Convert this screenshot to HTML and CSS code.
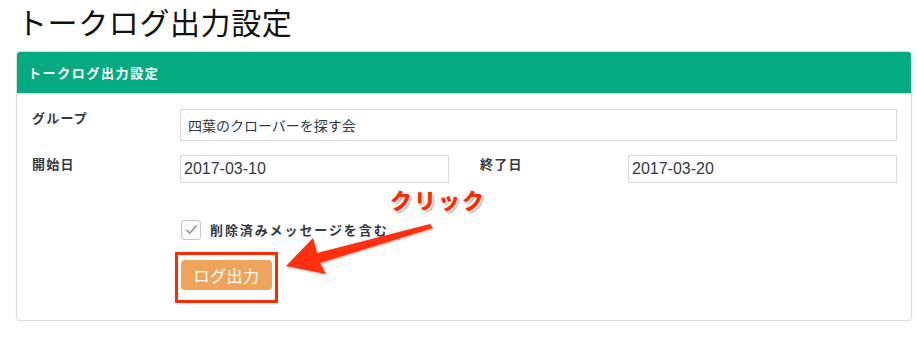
FILE: index.html
```html
<!DOCTYPE html>
<html lang="ja">
<head>
    <meta charset="UTF-8">
    <meta name="viewport" content="width=device-width, initial-scale=1.0">
    <title>トークログ出力設定</title>
    <link rel="stylesheet" href="styles.css">
</head>
<body>
    <h1 class="page-title">トークログ出力設定</h1>

    <div class="panel">
        <div class="panel-heading">トークログ出力設定</div>
        <div class="panel-body">
            <div class="form-grid">
                <label class="form-label">グループ</label>
                <div class="form-input wide">四葉のクローバーを探す会</div>

                <label class="form-label">開始日</label>
                <div class="form-input date">2017-03-10</div>
                <span class="spacer"></span>
                <label class="form-label">終了日</label>
                <div class="form-input date">2017-03-20</div>
            </div>

            <div class="check-row">
                <span class="checkbox">
                    <svg width="13" height="11" viewBox="0 0 13 11"><path d="M1.5 6 L4.8 9.3 L11.5 1.5" fill="none" stroke="#9a9a9a" stroke-width="1.6"/></svg>
                </span>
                <span class="check-label">削除済みメッセージを含む</span>
            </div>

            <div class="action-row">
                <span class="highlight-box">
                    <button class="btn-export">ログ出力</button>
                </span>
            </div>

            <!-- annotation overlay -->
            <div class="callout">クリック</div>
            <svg class="arrow" width="160" height="60" viewBox="0 0 160 60">
                <polygon points="146,4 149,8 36,43 42,54 2,46 29,18 33,33" fill="#ff2f0f"/>
            </svg>
        </div>
    </div>
</body>
</html>
```

FILE: styles.css
```css
body {
    margin: 0;
    font-family: "Liberation Sans", "Noto Sans CJK JP", sans-serif;
    background-color: #fff;
    color: #333;
}
.page-title {
    margin: 0;
    padding: 1px 0 0 17px;
    height: 50px;
    font-family: "Noto Sans CJK JP", sans-serif;
    font-size: 30px;
    font-weight: 400;
    line-height: 40px;
    letter-spacing: 0.6px;
    color: #111;
}
.panel {
    margin-left: 16px;
    width: 894px;
    border: 1px solid #dcdcdc;
    border-radius: 4px;
    box-shadow: 0 2px 2px rgba(0, 0, 0, 0.06);
    background: #fff;
}
.panel-heading {
    height: 41px;
    line-height: 41px;
    padding-left: 11px;
    background-color: #04ab80;
    border-radius: 3px 3px 0 0;
    color: #fff;
    font-family: "Noto Sans CJK JP", sans-serif;
    font-size: 13px;
    font-weight: 700;
    letter-spacing: 1.6px;
    border-bottom: 1px solid #d6e9e2;
}
.panel-body {
    position: relative;
    padding: 15px 14px 17px 15px;
}
.form-grid {
    display: grid;
    grid-template-columns: 148px 269px 31px 148px 269px;
    row-gap: 14px;
}
.form-label {
    font-family: "Noto Sans CJK JP", sans-serif;
    font-size: 13px;
    font-weight: 700;
    letter-spacing: 1.2px;
    color: #333a44;
    padding-top: 1px;
    line-height: 16px;
}
.form-input {
    box-sizing: border-box;
    border: 1px solid #dadada;
    color: #333a44;
    background: #fff;
}
.form-input.wide {
    grid-column: 2 / 6;
    height: 32px;
    line-height: 30px;
    padding-left: 7px;
    font-family: "Noto Sans CJK JP", sans-serif;
    font-size: 14px;
}
.form-input.date {
    height: 28px;
    line-height: 26px;
    padding-left: 3px;
    font-size: 16px;
}
.check-row {
    display: flex;
    align-items: center;
    gap: 9px;
    margin: 36px 0 0 149px;
    height: 21px;
}
.checkbox {
    display: flex;
    align-items: center;
    justify-content: center;
    box-sizing: border-box;
    width: 20px;
    height: 20px;
    border: 1px solid #c8c8c8;
    border-radius: 3px;
    background: #fafafa;
}
.check-label {
    font-family: "Noto Sans CJK JP", sans-serif;
    font-size: 13px;
    font-weight: 700;
    letter-spacing: 1.9px;
    color: #333a44;
}
.action-row {
    margin: 12px 0 0 143px;
}
.highlight-box {
    display: inline-block;
    border: 3px solid #ff2a00;
    padding: 5px 3px 10px 3px;
    line-height: 0;
}
.btn-export {
    width: 91px;
    height: 30px;
    border: none;
    border-radius: 4px;
    background-color: #f0a35a;
    color: #fff;
    font-family: "Noto Sans CJK JP", sans-serif;
    font-size: 16px;
    letter-spacing: 0.5px;
    line-height: 30px;
    padding: 0;
}
.callout {
    position: absolute;
    left: 373px;
    top: 89px;
    font-family: "Noto Sans CJK JP", sans-serif;
    font-size: 22px;
    font-weight: 900;
    letter-spacing: 2px;
    color: #ff2a00;
    text-shadow:
        -1px -1px 0 #fff, 1px -1px 0 #fff, -1px 1px 0 #fff, 1px 1px 0 #fff,
        2px 2px 2px rgba(0, 0, 0, 0.35);
}
.arrow {
    position: absolute;
    left: 267px;
    top: 126px;
    filter: drop-shadow(1px 1px 1px rgba(0, 0, 0, 0.3));
}
```
